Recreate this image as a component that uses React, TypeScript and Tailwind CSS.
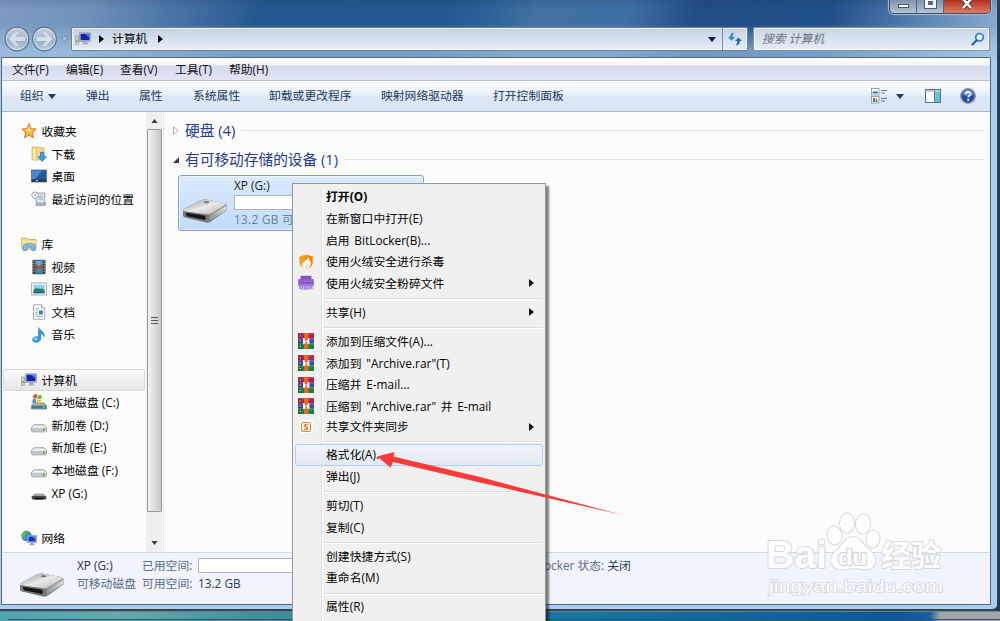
import type { ReactNode } from 'react'
import clsx from 'clsx'

interface IconProps {
  className?: string
}

function StarIcon() {
  return (
    <svg width="16" height="16" viewBox="0 0 16 16">
      <path d="M8 .8l2.1 4.8 5.1.5-3.9 3.4 1.2 5.2L8 12l-4.500 2.700 1.200-5.200L.8 6.100l5.100-.5z" fill="#ffb43c" stroke="#e2752a" strokeWidth="1" strokeLinejoin="round" />
      <path d="M8 3l1.300 3.300 3 .4L8 9 4 6.700l2.700-.5z" fill="#ffe58f" />
    </svg>
  )
}

function DownloadsIcon() {
  return (
    <svg width="16" height="16" viewBox="0 0 16 16">
      <path d="M1 1h7l5 1v11l-5 1-7-.5z" fill="#eed685" stroke="#c9a84e" strokeWidth=".7" />
      <path d="M1.500 1.500L5 3v12l-3.500-1.500z" fill="#faedb4" stroke="#d0b262" strokeWidth=".5" />
      <path d="M9.500 6.500h3.400v4.200h2.600l-4.300 4.900L7 10.700h2.500z" fill="#38a2e4" stroke="#1b6eb4" strokeWidth=".7" />
    </svg>
  )
}

function DesktopIcon() {
  return (
    <svg width="16" height="16" viewBox="0 0 16 16">
      <rect x=".5" y="2" width="15" height="12" fill="#2459a8" stroke="#5b6b80" strokeWidth=".8" />
      <path d="M1 2.500h10L4 11.500H1z" fill="#4a86d4" />
      <rect x="1" y="11.500" width="14" height="2" fill="#233247" />
      <rect x="5" y="12" width="2" height="1.200" fill="#e3c455" />
    </svg>
  )
}

function RecentIcon() {
  return (
    <svg width="16" height="16" viewBox="0 0 16 16">
      <path d="M5 2h9l-.5 10H15l-1 2.500H5L6 11H5z" fill="#dfe5ea" stroke="#8b959e" strokeWidth=".8" />
      <rect x="7.500" y="4.500" width="4.500" height="4.500" fill="#a7cfe6" />
      <path d="M5 11.500h10v3H4.500z" fill="#a9b1b8" />
      <circle cx="4" cy="4.200" r="3.300" fill="#f6f8fa" stroke="#98a2ac" strokeWidth=".9" />
      <path d="M4 2.200v2.200l1.500.6" fill="none" stroke="#6b7f92" strokeWidth=".7" />
    </svg>
  )
}

function LibraryIcon() {
  return (
    <svg width="16" height="16" viewBox="0 0 16 16">
      <path d="M.7 2h5l1.300 1.500h8v9.500H.7z" fill="#f2dc86" stroke="#c5a951" strokeWidth=".8" />
      <path d="M.7 5.500h14.300" stroke="#fff4be" />
      <path d="M2.500 14.500V10c0-3 11.500-3 11.500 0v4.500h-3.200V11H5.800v3.500z" fill="#7cc5ea" stroke="#4391c1" strokeWidth=".8" />
    </svg>
  )
}

function VideoIcon() {
  return (
    <svg width="16" height="16" viewBox="0 0 16 16">
      <rect x="1.500" y=".8" width="13" height="14.400" fill="#29343d" />
      <rect x="4.300" y="1.500" width="7.500" height="6.200" fill="#58a9d8" />
      <rect x="4.300" y="8.300" width="7.500" height="6.200" fill="#4688b7" />
      <path d="M4.300 4l4 4-4 5zM11.800 3.500L8 8l3.800 3z" fill="#b04b34" />
      <path d="M2.900 1.500v13M13.200 1.500v13" stroke="#c4cdd3" strokeWidth="1.200" strokeDasharray="1.300 1.200" />
    </svg>
  )
}

function PictureIcon() {
  return (
    <svg width="16" height="16" viewBox="0 0 16 16">
      <rect x=".7" y="2" width="14.600" height="12" fill="#fdfdfd" stroke="#8e969d" strokeWidth=".8" />
      <rect x="2.500" y="3.800" width="11" height="8.400" fill="#8fd0ee" />
      <path d="M2.500 9c3-3 5-1 7-1.300 2-.2 3 .3 4 .8v3.700h-11z" fill="#2c8069" />
      <path d="M2.500 11h11v1.200h-11z" fill="#215f9c" />
    </svg>
  )
}

function DocumentIcon() {
  return (
    <svg width="16" height="16" viewBox="0 0 16 16">
      <path d="M2.500.8h8l3.200 3.200v11.200H2.500z" fill="#fcfdfe" stroke="#8b959f" strokeWidth=".8" />
      <path d="M10.500.8V4h3.200" fill="#dfe5ea" stroke="#8b959f" strokeWidth=".7" />
      <path d="M4.200 4.500h4M4.200 6.500h3M4.200 8.500h3M4.200 10.500h3M4.200 12.500h7.500" stroke="#8ba0b5" strokeWidth=".8" />
      <rect x="8" y="6.500" width="3.800" height="4" fill="#3d79bd" />
    </svg>
  )
}

function MusicIcon() {
  return (
    <svg width="16" height="16" viewBox="0 0 16 16">
      <path d="M7.500.5c1 3.200 7 4 5.500 9.500-.5-2-1.500-3-3.300-3.300v5.100c0 2.300-2.500 3.700-4.900 3.500C1.500 15 .6 12.500 2.300 10.800c1.200-1.200 3.400-1.500 5.200-.8z" fill="#2c9ae0" stroke="#1b6fb1" strokeWidth=".5" />
      <ellipse cx="4.500" cy="12" rx="2.200" ry="1.400" fill="#8ad1f7" />
    </svg>
  )
}

function ComputerIcon() {
  return (
    <svg width="16" height="14" viewBox="0 0 16 14">
      <rect x=".6" y="4" width="3" height="8.500" fill="#c9ced2" stroke="#8b9399" strokeWidth=".6" />
      <rect x="1.200" y="8" width="1.500" height="2" fill="#55b23d" />
      <rect x="4.500" y=".8" width="11" height="8.600" fill="#d3d7dc" stroke="#8b9096" strokeWidth=".7" />
      <rect x="5.500" y="1.700" width="9" height="6.600" fill="#1420b4" />
      <path d="M10 1.700h4.500v4z" fill="#5a79ea" />
      <path d="M8.500 9.500h3.500l1.500 3h-6.500z" fill="#a9aeb4" />
    </svg>
  )
}

function SystemDriveIcon() {
  return (
    <svg width="16" height="16" viewBox="0 0 16 16">
      <path d="M3 9h10l2.500 2.500v3.500H.5v-3.500z" fill="#a5afb6" stroke="#65737e" strokeWidth=".7" />
      <path d="M1 11.700h14v2.800H1z" fill="#3f7c93" />
      <path d="M2.500.9q2-1.300 3.800-.3L5.600 4.400q-2-.9-3.700.2z" fill="#e2532a" />
      <path d="M7 .9q2 1 4-.1l-.7 3.700q-2 1-4 0z" fill="#70b13b" />
      <path d="M1.700 5.500q2-1.200 3.700-.2l-.6 3.700q-2-.9-3.700.2z" fill="#3f8fd9" />
      <path d="M6.200 5.500q2 1 4 0l-.7 3.800q-2 1-4 0z" fill="#f3bf2c" />
      <rect x="12" y="12.500" width="1.800" height="1.200" fill="#6fe05a" />
    </svg>
  )
}

function DriveIcon() {
  return (
    <svg width="16" height="16" viewBox="0 0 16 16">
      <path d="M3 7.800h10l2.400 2.600v3.400q0 1-1 1H1.600q-1 0-1-1v-3.400z" fill="#f1f2f3" stroke="#8b8f93" strokeWidth=".9" />
      <path d="M1 10.700h14v2.800q0 .8-.8.8H1.800q-.8 0-.8-.8z" fill="#c4c7cc" />
      <rect x="12" y="11.300" width="1.500" height="2.400" fill="#46ad32" />
    </svg>
  )
}

function RemovableIcon() {
  return (
    <svg width="16" height="16" viewBox="0 0 16 16">
      <path d="M3.500 8.500h9l2.800 3H.7z" fill="#a2a5a8" />
      <path d="M.7 11h14.600v2.500q0 1-1 1H1.700q-1 0-1-1z" fill="#4a4d50" />
      <path d="M3 12.500h10l-1 2H4z" fill="#17191b" />
    </svg>
  )
}

function NetworkIcon() {
  return (
    <svg width="16" height="16" viewBox="0 0 16 16">
      <circle cx="5.500" cy="6" r="5.200" fill="#3489d4" />
      <path d="M2 2.500q3-3 5-1.500L6 4 4 5l-.5 4L1 7q-1-2 1-4.500z" fill="#5bbd4e" />
      <rect x="6.500" y="5.500" width="9" height="7.200" fill="#e0e5e9" stroke="#7b858e" strokeWidth=".6" />
      <rect x="7.400" y="6.400" width="7.200" height="5.200" fill="#1433bd" />
      <path d="M11 6.400h3.600v3z" fill="#5c8cf0" />
      <path d="M9.500 13h3l1 2.300h-5z" fill="#9ba3aa" />
    </svg>
  )
}

function BigDrive({ className }: IconProps) {
  return (
    <svg className={clsx('shrink-0', className)} width="46" height="26" viewBox="0 0 46 26">
      <defs>
        <linearGradient id="driveTop" x1="0" y1="0" x2="1" y2="1">
          <stop offset="0" stopColor="#909294" />
          <stop offset=".5" stopColor="#e9e9ea" />
          <stop offset="1" stopColor="#b1b2b4" />
        </linearGradient>
        <linearGradient id="driveSide" x1="0" y1="0" x2="1" y2="0">
          <stop offset="0" stopColor="#8d8e90" />
          <stop offset="1" stopColor="#dadbdc" />
        </linearGradient>
      </defs>
      <path d="M1 11.500L18 2.500q3-1.500 6-1l18 3.500q2.500.5 2.500 2v5.500L29 23.500q-2 1.500-5 1L3 19.500q-2-.5-2-2z" fill="#77797b" />
      <path d="M1 11.500L18 2.500q3-1.500 6-1l18 3.500q2.500.6 1.500 2L29 15.500q-2 1.300-5 .8L2.500 13.500q-2-.5-1.500-2z" fill="url(#driveTop)" />
      <path d="M2 13.300l22 3.200q1.500.3 1.500 2v4.500q0 1.300-2 .9L4 19q-2-.5-2-2z" fill="#747577" />
      <path d="M4 14.700l18 2.800q1.800.5 1.800 2.500 0 2.300-2 1.800L6 18.500q-2-.5-2-3.800z" fill="#161617" />
      <path d="M27 17.300L44.300 7.500V12L28 23z" fill="url(#driveSide)" />
      <ellipse cx="24.500" cy="4.200" rx="2.700" ry="1" fill="#6f7173" />
    </svg>
  )
}

function ShieldIcon() {
  return (
    <svg width="16" height="16" viewBox="0 0 16 16">
      <path d="M8 .7l6.500 1.800v6c0 3.500-3.500 6-6.500 7-3-1-6.500-3.500-6.500-7v-6z" fill="#ff9d1e" />
      <path d="M8 .7l6.500 1.800v6c0 3.500-3.500 6-6.500 7z" fill="#fb8500" />
      <path d="M10.500 2.500C10.500 6 4.300 7 4 11c-.1 2 1.500 3.800 4 4.500 2.500-.8 4.700-2.900 4.700-6 0-1.400-.4-2.300-.6-3.500-.5.600-.8 1-1.200 1.200.4-1.600.3-3-.4-4.700z" fill="#fff" />
      <path d="M8.700 9c.2 1.700-1.700 2-1.500 4 .1.900.4 1.300.8 1.700 1-.6 1.700-1.500 1.700-3 0-1-.4-1.500-1-2.700z" fill="#ffdda8" />
    </svg>
  )
}

function ShredderIcon() {
  return (
    <svg width="16" height="16" viewBox="0 0 16 16">
      <path d="M2.500.8h11v4h-11z" fill="#8652c8" />
      <rect x=".2" y="4" width="15.600" height="7" rx="1" fill="#9463d4" />
      <path d="M1 7.500h14v1.500H1z" fill="#7b45bd" />
      <path d="M2.200 8.500v5.500M4.500 8.500v6.300M6.800 8.500v6.300M9.100 8.500v6.300M11.400 8.500v6.300M13.700 8.500v5.500" stroke="#a47ae0" strokeWidth="1.800" />
    </svg>
  )
}

function RarIcon() {
  return (
    <svg width="16" height="16" viewBox="0 0 16 16">
      <rect width="16" height="5.300" fill="#b62049" />
      <rect y="5.300" width="16" height="5.300" fill="#4746ae" />
      <rect y="10.600" width="16" height="5.400" fill="#178240" />
      <path d="M0 .8h16" stroke="#cf4569" />
      <path d="M0 6h16" stroke="#6465c6" />
      <path d="M0 11.200h16" stroke="#36a35b" />
      <path d="M1.200 0v16M3.500 0v16" stroke="#2b2a4d" strokeWidth=".5" />
      <path d="M1.500 8h1.700M1.500 3h1.700M1.500 13.500h1.700" stroke="#f0cd45" />
      <rect x="6" width="4.500" height="16" fill="#e3671f" />
      <path d="M5 5.200h1.700v2.300h3V5.200h1.700v5.600H5z" fill="#fbf8f4" />
      <rect x="7.500" y="8.500" width="1.500" height="2.300" fill="#d9502a" />
    </svg>
  )
}

function SyncIcon() {
  return (
    <span className="flex h-[13px] w-[13px] items-center justify-center bg-white">
      <span className="flex h-[10px] w-[10px] items-center justify-center rounded-[2px] border border-[#e8862f] bg-[#fff5e8] text-[9px] leading-none font-bold text-[#e06e10]">
        S
      </span>
    </span>
  )
}

interface NavItem {
  label: string
  icon: ReactNode
  root?: boolean
  selected?: boolean
}

// null entries are the blank rows between groups
const NAV_ITEMS: (NavItem | null)[] = [
  { label: '收藏夹', icon: <StarIcon />, root: true },
  { label: '下载', icon: <DownloadsIcon /> },
  { label: '桌面', icon: <DesktopIcon /> },
  { label: '最近访问的位置', icon: <RecentIcon /> },
  null,
  { label: '库', icon: <LibraryIcon />, root: true },
  { label: '视频', icon: <VideoIcon /> },
  { label: '图片', icon: <PictureIcon /> },
  { label: '文档', icon: <DocumentIcon /> },
  { label: '音乐', icon: <MusicIcon /> },
  null,
  { label: '计算机', icon: <ComputerIcon />, root: true, selected: true },
  { label: '本地磁盘 (C:)', icon: <SystemDriveIcon /> },
  { label: '新加卷 (D:)', icon: <DriveIcon /> },
  { label: '新加卷 (E:)', icon: <DriveIcon /> },
  { label: '本地磁盘 (F:)', icon: <DriveIcon /> },
  { label: 'XP (G:)', icon: <RemovableIcon /> },
  null,
  { label: '网络', icon: <NetworkIcon />, root: true },
]

interface MenuEntry {
  label: string
  icon?: ReactNode
  bold?: boolean
  submenu?: boolean
  active?: boolean
  short?: boolean
}

const CONTEXT_MENU: MenuEntry[][] = [
  [
    { label: '打开(O)', bold: true },
    { label: '在新窗口中打开(E)' },
    { label: '启用 BitLocker(B)...' },
    { label: '使用火绒安全进行杀毒', icon: <ShieldIcon /> },
    { label: '使用火绒安全粉碎文件', icon: <ShredderIcon />, submenu: true },
  ],
  [{ label: '共享(H)', submenu: true }],
  [
    { label: '添加到压缩文件(A)...', icon: <RarIcon /> },
    { label: '添加到 "Archive.rar"(T)', icon: <RarIcon /> },
    { label: '压缩并 E-mail...', icon: <RarIcon /> },
    { label: '压缩到 "Archive.rar" 并 E-mail', icon: <RarIcon /> },
    { label: '共享文件夹同步', icon: <SyncIcon />, submenu: true, short: true },
  ],
  [{ label: '格式化(A)...', active: true }, { label: '弹出(J)' }],
  [{ label: '剪切(T)' }, { label: '复制(C)' }],
  [{ label: '创建快捷方式(S)' }, { label: '重命名(M)' }],
  [{ label: '属性(R)' }],
]

function Arrow({ className }: IconProps) {
  return (
    <svg className={clsx('shrink-0', className)} width="5" height="8" viewBox="0 0 5 8">
      <path d="M0 0l5 4-5 4z" fill="currentColor" />
    </svg>
  )
}

function Caret({ className }: IconProps) {
  return (
    <svg className={clsx('shrink-0', className)} width="8" height="5" viewBox="0 0 8 5">
      <path d="M0 0h8L4 5z" fill="currentColor" />
    </svg>
  )
}

function NavButtons() {
  return (
    <svg className="shrink-0" width="68" height="26" viewBox="0 0 68 26">
      <defs>
        <linearGradient id="orb" x1="0" y1="0" x2="0" y2="1">
          <stop offset="0" stopColor="#c3d0df" />
          <stop offset=".48" stopColor="#a9bacf" />
          <stop offset=".52" stopColor="#94a9c3" />
          <stop offset="1" stopColor="#bfd0e2" />
        </linearGradient>
      </defs>
      <path d="M17 1h28v5q-6 4-14 0-6 4-14 0z" fill="#8299b7" opacity=".6" />
      <circle cx="17" cy="13" r="11.800" fill="url(#orb)" stroke="#5b6f8b" strokeWidth="1.200" />
      <circle cx="44.500" cy="13" r="11.800" fill="url(#orb)" stroke="#5b6f8b" strokeWidth="1.200" />
      <circle cx="17" cy="13" r="10.700" fill="none" stroke="#dce6f1" strokeWidth=".7" />
      <circle cx="44.500" cy="13" r="10.700" fill="none" stroke="#dce6f1" strokeWidth=".7" />
      <path d="M9 13l7-7h3l-4 5h10v4H15l4 5h-3z" fill="#d5dfea" />
      <path d="M52.500 13l-7-7h-3l4 5h-10v4h10l-4 5h3z" fill="#d5dfea" />
      <path d="M61 11h7l-3.500 4z" fill="#b9cbe0" stroke="#617c9f" strokeWidth=".7" />
    </svg>
  )
}

function WindowControls() {
  return (
    <div className="mr-[6px] flex h-[14px] overflow-hidden rounded-b-[5px] border border-t-0 border-[#3e5069] shadow-[0_0_1px_1px_#a9bfd8]">
      <div className="flex w-[27px] items-start justify-center border-r border-[#53667f] bg-linear-to-b from-[#8193aa] to-[#b4c3d5] pt-1">
        <span className="h-[4px] w-[11px] border border-[#46556b] bg-white" />
      </div>
      <div className="flex w-[27px] items-start justify-center border-r border-[#53667f] bg-linear-to-b from-[#8193aa] to-[#b4c3d5]">
        <span className="mt-[-2px] h-[10px] w-[11px] border-[3px] border-[#f5f7fa] bg-[#5a6a80] outline outline-[#4e5d72]" />
      </div>
      <div className="flex w-[46px] items-start justify-center bg-linear-to-b from-[#b32f1c] to-[#dc7c62]">
        <svg width="14" height="10" viewBox="0 0 14 10">
          <path d="M3-1l8 9M11-1L3 8" stroke="#4d3033" strokeWidth="4.200" />
          <path d="M3-1l8 9M11-1L3 8" stroke="#fff" strokeWidth="2.600" />
        </svg>
      </div>
    </div>
  )
}

function TitleBar() {
  return (
    <div className="flex h-[57px] flex-col bg-[linear-gradient(to_bottom,rgba(20,50,90,0.15)_0,transparent_10px,transparent_24px,rgba(175,208,240,0.6)_50px),linear-gradient(112deg,#7f9dc3_0%,#7292ba_9%,#4c76a8_17%,#255890_26%,#235890_44%,#2b6098_48%,#40719f_53%,#3f70a5_62%,#1f4d84_69%,#20508a_82%,#6d93bd_94%,#8fb0d2_100%)]">
      <div className="flex h-[26px] justify-end">
        <WindowControls />
      </div>
      <div className="flex h-[26px] items-center">
        <NavButtons />
        <div className="ml-[3px] flex h-[24px] w-[677px] items-center rounded-[2px] border border-[#6d8097] bg-linear-to-b from-[#c3d1e2] to-[#e4eef8] pl-[3px] shadow-[inset_0_0_0_1px_rgba(255,255,255,0.7)]">
          <ComputerIcon />
          <Arrow className="ml-[8px] text-black" />
          <span className="ml-[8px] w-[37px] text-black">计算机</span>
          <Arrow className="ml-[9px] text-black" />
          <div className="flex-1" />
          <Caret className="mr-[6px] text-[#0b0b5e]" />
          <div className="flex h-full w-[25px] items-center justify-center border-l border-[#7c8ea5]">
            <svg width="14" height="14" viewBox="0 0 14 14">
              <path d="M3.500 8.500L0 5h2.200V4.500Q2.200 1 6.200.8 4.700 2 4.700 4v1H7z" fill="#2f8ad2" />
              <path d="M10.500 5.500L14 9h-2.200v.5q0 3.500-4 3.700 1.500-1.200 1.500-3.200V9H7z" fill="#2566b4" />
            </svg>
          </div>
        </div>
        <div className="ml-[5px] flex h-[24px] w-[237px] items-center rounded-[2px] border border-[#7e92ab] bg-linear-to-b from-[#c8d5e4] to-[#e6eff8] pr-[4px] pl-[8px] shadow-[inset_0_0_0_1px_rgba(255,255,255,0.7)]">
          <span className="flex-1 text-[#6f7680] italic">搜索 计算机</span>
          <svg width="14" height="14" viewBox="0 0 14 14">
            <circle cx="8.500" cy="5.300" r="3.800" fill="#e5f2fc" stroke="#2d80c8" strokeWidth="1.700" />
            <path d="M5.700 8.200L1.500 12.500" stroke="#2b5fae" strokeWidth="2.200" strokeLinecap="round" />
          </svg>
        </div>
      </div>
    </div>
  )
}

function MenuBar() {
  return (
    <div className="flex h-[23px] items-center border-b border-[#b6bccc] bg-[linear-gradient(#fff_0,#f2f4fb_7px,#d5dbee_8px,#e0e5f4_100%)] pt-px pl-[10px] text-[#111]">
      <span className="w-[54px]">文件(F)</span>
      <span className="w-[54px]">编辑(E)</span>
      <span className="w-[55px]">查看(V)</span>
      <span className="w-[54px]">工具(T)</span>
      <span>帮助(H)</span>
    </div>
  )
}

function CommandBar() {
  return (
    <div className="flex h-[31px] items-center border-b border-[#a7b7cb] bg-[linear-gradient(#fbfdff_0,#e8f1fb_14px,#dce7f5_15px,#dbe6f4_100%)] pl-[18px] text-[#1e395b]">
      <span className="w-[28px]">组织</span>
      <Caret className="mr-[30px]" />
      <span className="w-[53px]">弹出</span>
      <span className="w-[54px]">属性</span>
      <span className="w-[76px]">系统属性</span>
      <span className="w-[112px]">卸载或更改程序</span>
      <span className="w-[112px]">映射网络驱动器</span>
      <span>打开控制面板</span>
      <div className="flex-1" />
      <svg width="17" height="16" viewBox="0 0 17 16">
        <rect x=".5" y=".5" width="7.500" height="6.500" fill="#fff" stroke="#8595a8" strokeWidth=".8" />
        <path d="M1.500 3.500h5.500v2H1.500z" fill="#2c7e9b" />
        <rect x=".5" y="8.500" width="7.500" height="6.500" fill="#fff" stroke="#8595a8" strokeWidth=".8" />
        <rect x="2" y="10" width="2" height="2" fill="#d14a35" />
        <rect x="4.500" y="10" width="2" height="2" fill="#e4bd31" />
        <rect x="2" y="12" width="2" height="2" fill="#3e71c8" />
        <rect x="4.500" y="12" width="2" height="2" fill="#3ba34c" />
        <path d="M10 2.500h6M10 5h4M10 10.500h6M10 13h4" stroke="#667587" />
      </svg>
      <Caret className="ml-[8px]" />
      <svg className="ml-[21px]" width="16" height="14" viewBox="0 0 16 14">
        <rect x=".5" y=".5" width="15" height="13" fill="#fff" stroke="#5f6f86" />
        <path d="M1 1h14v2H1z" fill="#c3ccd9" />
        <path d="M10 3h5v10h-5z" fill="#68bfe0" />
        <path d="M9.500 1v12" stroke="#5f7f96" />
      </svg>
      <svg className="mr-[14px] ml-[19px]" width="16" height="16" viewBox="0 0 16 16">
        <circle cx="8" cy="8" r="7.200" fill="#2448ae" stroke="#8e939c" strokeWidth="1.500" />
        <path d="M2.500 7a5.500 5.500 0 0111 0q-5 2-11 0z" fill="#5d86dc" />
        <path d="M5.800 6.200c0-3 4.600-3 4.600-.3 0 1.600-2.200 1.600-2.200 3.500" fill="none" stroke="#fff" strokeWidth="1.700" />
        <circle cx="8.200" cy="11.800" r="1.100" fill="#fff" />
      </svg>
    </div>
  )
}

function Sidebar() {
  return (
    <div className="flex w-[162px] shrink-0 border-r border-[#dde8f5]">
      <div className="w-[144px] pt-[8px] pl-px text-black">
        {NAV_ITEMS.map((item, i) =>
          item ? (
            <div
              key={i}
              className={clsx(
                'flex h-[22.6px] w-[142px] items-center rounded-[2px] border whitespace-nowrap',
                item.root ? 'pl-[17px]' : 'pl-[27px]',
                item.selected ? 'border-[#d9d9d9] bg-linear-to-b from-[#fafafa] to-[#e6e6e6]' : 'border-transparent',
              )}
            >
              <span className="flex w-[20.5px] shrink-0">{item.icon}</span>
              <span className="pt-[1.5px]">{item.label}</span>
            </div>
          ) : (
            <div key={i} className="h-[22.6px]" />
          ),
        )}
      </div>
      <div className="flex w-[16px] flex-col items-center bg-[#f0f0f0]">
        <div className="flex h-[17px] items-center text-[#444]">
          <Caret className="h-[4px] w-[7px] rotate-180" />
        </div>
        <div className="flex h-[383px] w-[15px] flex-col items-center justify-center gap-[2px] rounded-[1px] border border-[#979797] bg-linear-to-r from-[#f4f4f4] to-[#c5c7cb]">
          <span className="h-px w-[7px] bg-[#555]" />
          <span className="h-px w-[7px] bg-[#555]" />
          <span className="h-px w-[7px] bg-[#555]" />
        </div>
        <div className="flex flex-1 items-center pt-[22px] text-[#444]">
          <Caret className="h-[4px] w-[7px]" />
        </div>
      </div>
    </div>
  )
}

function FileArea() {
  return (
    <div className="flex-1 pr-[6px] pl-[9px]">
      <div className="mt-[4px] flex h-[29px] items-center text-[14.7px] text-[#263a8c]">
        <svg width="6" height="9" viewBox="0 0 6 9">
          <path d="M.5.7l4.700 3.800L.5 8.300z" fill="#fff" stroke="#a6a6a6" strokeWidth=".9" />
        </svg>
        <span className="ml-[6px]">硬盘 (4)</span>
        <span className="ml-[6px] h-px flex-1 bg-[#e2e2e2]" />
      </div>
      <div className="flex h-[29px] items-center text-[14.7px] text-[#263a8c]">
        <svg width="6" height="6" viewBox="0 0 6 6">
          <path d="M6 0v6H0z" fill="#3c3c3c" />
        </svg>
        <span className="ml-[6px]">有可移动存储的设备 (1)</span>
        <span className="ml-[6px] h-px flex-1 bg-[#e2e2e2]" />
      </div>
      <div className="mt-px ml-[5px] flex h-[56px] w-[246px] rounded-[3px] border border-[#7da2ce] bg-linear-to-b from-[#dcebfd] to-[#c1dbfc] pl-[3px] shadow-[inset_0_0_0_1px_rgba(255,255,255,0.5)]">
        <BigDrive className="mt-[22px]" />
        <div className="ml-[6px] flex-1 pt-px">
          <div className="h-[18px] leading-[17px] text-[#1b1b1b]">XP (G:)</div>
          <div className="mr-[8px] h-[15px] border border-[#b2b2b2] bg-[#fdfdfd]" />
          <div className="h-[17px] leading-[18px] tracking-[0.3px] whitespace-nowrap text-[#6d7f97]">13.2 GB 可用</div>
        </div>
      </div>
    </div>
  )
}

function DetailsPane() {
  return (
    <div className="flex h-[52px] border-t border-[#ccd9ea] bg-[#f1f4fc] pl-[17px] leading-[18px] text-[#5a6b85]">
      <BigDrive className="mt-[19px]" />
      <div className="ml-[12px] w-[65px] pt-[3px] whitespace-nowrap">
        <div className="text-[#1e2d45]">XP (G:)</div>
        <div>可移动磁盘</div>
      </div>
      <div className="w-[53px] pt-[3px] whitespace-nowrap">
        <div>已用空间:</div>
        <div>可用空间:</div>
      </div>
      <div className="ml-[3px] w-[110px] pt-[3px]">
        <div className="mt-[2px] mb-px h-[15px] rounded-[1px] border border-[#b2b2b2] bg-[#fdfdfd]" />
        <div className="text-[#1e395b]">13.2 GB</div>
      </div>
      <div className="flex flex-1 gap-[3px] pt-[3px] pl-[215px]">
        <span>BitLocker 状态:</span>
        <span className="text-[#1e395b]">关闭</span>
      </div>
    </div>
  )
}

function ContextMenu() {
  return (
    <div className="absolute top-[183px] left-[292px] h-[450px] w-[254px] border border-[#979797] bg-[#f0f0f0] pt-[2px] pr-[2px] pl-[2px] text-black shadow-[3px_3px_2px_rgba(0,0,0,0.5)]">
      <div className="h-full bg-[linear-gradient(to_right,transparent_26px,#e0e0e0_26px_27px,#fff_27px_28px,transparent_28px)]">
        {CONTEXT_MENU.map((group, g) => (
          <div key={g}>
            {g > 0 && (
              <div className="flex h-[7.5px] items-end pb-[1.5px] pl-[28px]">
                <span className="h-[2px] flex-1 border-t border-b border-t-[#dedede] border-b-white" />
              </div>
            )}
            {group.map((entry) => (
              <div
                key={entry.label}
                className={clsx(
                  'flex items-center rounded-[3px] border pr-[8px] whitespace-nowrap',
                  entry.short ? 'h-[19.6px]' : 'h-[21.6px]',
                  entry.active ? 'border-[#aecff7] bg-linear-to-b from-[#f0f3f8] to-[#e2e9f3]' : 'border-transparent',
                )}
              >
                <span className="flex w-[30px] shrink-0 justify-center pr-[10px]">{entry.icon}</span>
                <span className={clsx('flex-1 pt-px tracking-[0.05px] [word-spacing:1.5px]', entry.bold && 'font-bold')}>{entry.label}</span>
                {entry.submenu && <Arrow className="text-[#111]" />}
              </div>
            ))}
          </div>
        ))}
      </div>
    </div>
  )
}

function PointerArrow() {
  return (
    <svg className="absolute top-[445px] left-[370px]" width="260" height="75" viewBox="0 0 260 75">
      <path d="M7 11.500L24.500 7l-1 4.500L110 32l142.500 38L110 37.500 23 17l-2.500 5.500z" fill="#fb3b38" />
    </svg>
  )
}

function Watermark() {
  return (
    <svg className="absolute top-[505px] left-[760px]" width="190" height="95" viewBox="0 0 190 95" fill="#fff" stroke="#d3d6db" strokeWidth="2" strokeLinejoin="round" paintOrder="stroke" opacity=".9">
      <text x="6" y="63" fontSize="38" fontWeight="700" fontFamily="Liberation Sans, sans-serif" textLength="61" lengthAdjust="spacingAndGlyphs">Bai</text>
      <ellipse cx="74.500" cy="30.500" rx="7" ry="9" transform="rotate(-8 74 30)" />
      <ellipse cx="87" cy="18" rx="7" ry="9.500" />
      <ellipse cx="103" cy="19" rx="7" ry="9.500" transform="rotate(8 103 19)" />
      <ellipse cx="113" cy="34" rx="6.500" ry="8.500" transform="rotate(10 113 34)" />
      <path d="M93 32c7 0 10 7 14 11 5 4 9 8 8 14-1 7-7 8-12 7-6-1-13-1-19 0-6 1-12-1-13-8 0-6 4-9 8-13 4-4 7-11 14-11z" />
      <text x="78" y="60" fontSize="22" fontWeight="700" fontFamily="Liberation Sans, sans-serif" textLength="29" lengthAdjust="spacingAndGlyphs" strokeWidth="2.600">du</text>
      <text x="121" y="61" fontSize="30" fontWeight="700" fontFamily="Noto Sans CJK SC, sans-serif" textLength="60" lengthAdjust="spacingAndGlyphs">经验</text>
      <text x="9" y="87" fontSize="17" fontFamily="Liberation Sans, sans-serif" strokeWidth="1.600" textLength="174" lengthAdjust="spacingAndGlyphs">jingyan.baidu.com</text>
    </svg>
  )
}

export default function App() {
  return (
    <div className="relative h-[621px] w-[1000px] overflow-hidden bg-[#263c50] font-['Open_Sans','Noto_Sans_CJK_SC',sans-serif] text-[11.8px] leading-none">
      <div className="flex h-[611px] w-[998px] flex-col rounded-br-[6px] border-r border-b-2 border-[#39434e] bg-[#a9cdf1] pr-[6px]">
        <div className="mr-[-6px]">
          <TitleBar />
        </div>
        <div className="ml-px flex h-[548px] flex-col border border-[#56677c] bg-[#fcfcfc]">
          <MenuBar />
          <CommandBar />
          <div className="flex flex-1">
            <Sidebar />
            <FileArea />
          </div>
          <DetailsPane />
        </div>
      </div>
      <div className="h-[10px] border-t border-[#6c8792] bg-[linear-gradient(to_right,#4ba5b3,#65a9ab_12%,#428e9c_26%,#1778a3_55%,#0a5799_90%,#1760a0_93%,#a0a5a9_94%)] pt-[7px]">
        <div className="ml-[8px] h-px bg-[#31566a]" />
      </div>
      <ContextMenu />
      <PointerArrow />
      <Watermark />
    </div>
  )
}
